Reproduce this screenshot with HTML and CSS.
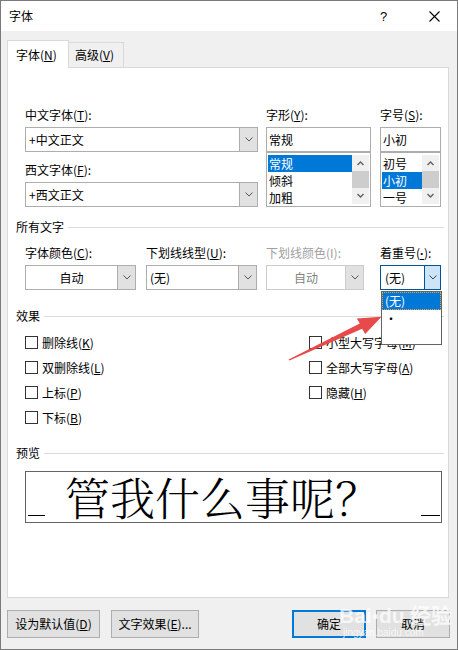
FILE: index.html
```html
<!DOCTYPE html>
<html lang="zh-CN">
<head>
<meta charset="utf-8">
<title>字体</title>
<link rel="stylesheet" href="styles.css">
</head>
<body>
<div class="window">
  <div class="titlebar">
    <span class="title">字体</span>
    <span class="help">?</span>
    <svg class="close" width="11" height="11" viewBox="0 0 11 11"><path d="M0.5 0.5 L10.5 10.5 M10.5 0.5 L0.5 10.5" stroke="#000" stroke-width="1.1" fill="none"/></svg>
  </div>
  <div class="main">
    <div class="tabs">
      <div class="tab active">字体(<u>N</u>)</div>
      <div class="tab">高级(<u>V</u>)</div>
    </div>
    <div class="panel">
      <div class="toprow">
        <div class="col col-font">
          <div class="label">中文字体(<u>T</u>):</div>
          <div class="select"><span class="val">+中文正文</span><span class="arrow"><svg width="8" height="5" viewBox="0 0 8 5"><path d="M0.5 0.5 L4 4 L7.5 0.5" stroke="#555" fill="none"/></svg></span></div>
          <div class="label label2">西文字体(<u>F</u>):</div>
          <div class="select"><span class="val">+西文正文</span><span class="arrow"><svg width="8" height="5" viewBox="0 0 8 5"><path d="M0.5 0.5 L4 4 L7.5 0.5" stroke="#555" fill="none"/></svg></span></div>
        </div>
        <div class="col col-style">
          <div class="label">字形(<u>Y</u>):</div>
          <div class="input">常规</div>
          <div class="list">
            <div class="items">
              <div class="item sel">常规</div>
              <div class="item">倾斜</div>
              <div class="item">加粗</div>
            </div>
            <div class="sbar">
              <div class="sbtn"><svg width="7" height="5" viewBox="0 0 7 5"><path d="M0.5 4 L3.5 1 L6.5 4" stroke="#606060" stroke-width="1.4" fill="none"/></svg></div>
              <div class="thumb"></div>
              <div class="sbtn"><svg width="7" height="5" viewBox="0 0 7 5"><path d="M0.5 1 L3.5 4 L6.5 1" stroke="#606060" stroke-width="1.4" fill="none"/></svg></div>
            </div>
          </div>
        </div>
        <div class="col col-size">
          <div class="label">字号(<u>S</u>):</div>
          <div class="input">小初</div>
          <div class="list">
            <div class="items">
              <div class="item">初号</div>
              <div class="item sel">小初</div>
              <div class="item">一号</div>
            </div>
            <div class="sbar">
              <div class="sbtn"><svg width="7" height="5" viewBox="0 0 7 5"><path d="M0.5 4 L3.5 1 L6.5 4" stroke="#606060" stroke-width="1.4" fill="none"/></svg></div>
              <div class="thumb"></div>
              <div class="sbtn"><svg width="7" height="5" viewBox="0 0 7 5"><path d="M0.5 1 L3.5 4 L6.5 1" stroke="#606060" stroke-width="1.4" fill="none"/></svg></div>
            </div>
          </div>
        </div>
      </div>

      <div class="group group-all"><span>所有文字</span><i></i></div>
      <div class="colorrow">
        <div class="col c1">
          <div class="label">字体颜色(<u>C</u>):</div>
          <div class="select"><span class="val center">自动</span><span class="arrow"><svg width="8" height="5" viewBox="0 0 8 5"><path d="M0.5 0.5 L4 4 L7.5 0.5" stroke="#555" fill="none"/></svg></span></div>
        </div>
        <div class="col c2">
          <div class="label">下划线线型(<u>U</u>):</div>
          <div class="select"><span class="val">(无)</span><span class="arrow"><svg width="8" height="5" viewBox="0 0 8 5"><path d="M0.5 0.5 L4 4 L7.5 0.5" stroke="#555" fill="none"/></svg></span></div>
        </div>
        <div class="col c3">
          <div class="label disabled">下划线颜色(I):</div>
          <div class="select dis"><span class="val center">自动</span><span class="arrow"><svg width="8" height="5" viewBox="0 0 8 5"><path d="M0.5 0.5 L4 4 L7.5 0.5" stroke="#555" fill="none"/></svg></span></div>
        </div>
        <div class="col c4">
          <div class="label">着重号(<u class="dot">·</u>):</div>
          <div class="select focus"><span class="val">(无)</span><span class="arrow"><svg width="8" height="5" viewBox="0 0 8 5"><path d="M0.5 0.5 L4 4 L7.5 0.5" stroke="#444" fill="none"/></svg></span></div>
        </div>
      </div>

      <div class="group group-fx"><span>效果</span><i></i></div>
      <div class="effects">
        <div class="fxcol left">
          <label class="cb"><span class="box"></span>删除线(<u>K</u>)</label>
          <label class="cb"><span class="box"></span>双删除线(<u>L</u>)</label>
          <label class="cb"><span class="box"></span>上标(<u>P</u>)</label>
          <label class="cb"><span class="box"></span>下标(<u>B</u>)</label>
        </div>
        <div class="fxcol right">
          <label class="cb"><span class="box"></span>小型大写字母(<u>M</u>)</label>
          <label class="cb"><span class="box"></span>全部大写字母(<u>A</u>)</label>
          <label class="cb"><span class="box"></span>隐藏(<u>H</u>)</label>
        </div>
      </div>

      <div class="group group-pv"><span>预览</span><i></i></div>
      <div class="preview">
        <span class="us"></span>
        <span class="ptext">管我什么事呢？</span>
        <span class="us us-r"></span>
      </div>
    </div>
  </div>
  <div class="buttons">
    <div class="btn b-def">设为默认值(<u>D</u>)</div>
    <div class="btn b-fx">文字效果(<u>E</u>)...</div>
    <div class="spacer"></div>
    <div class="btn b-ok">确定</div>
    <div class="btn b-cancel">取消</div>
  </div>

  <div class="dropdown">
    <div class="dd-item dd-sel">(无)</div>
    <div class="dd-item">·</div>
  </div>

  <svg class="redarrow" width="458" height="650" viewBox="0 0 458 650">
    <polygon points="288.6,359.4 359.8,323.6 356.8,318.4 381.5,316.8 365.2,334 362.2,328.8 289.4,360.6" fill="#e8494a"/>
  </svg>

  <div class="watermark">
    <div class="wm1">Bai<span class="paw">●</span>du 经验</div>
    <div class="wm2">jingyan.baidu.com</div>
  </div>
</div>
</body>
</html>
```

FILE: styles.css
```css
* { box-sizing: border-box; }
html, body { margin: 0; padding: 0; background: #fff; }
body {
  font-family: "Noto Sans CJK SC", "Microsoft YaHei", sans-serif;
  font-size: 12px;
  color: #000;
}
u { text-decoration: underline; text-underline-offset: 1px; }
u.dot { font-family: "Liberation Sans", sans-serif; font-weight: bold; }

.window {
  position: relative;
  width: 458px;
  height: 650px;
  border: 1px solid #7a7a7a;
  background: #f0f0f0;
  overflow: hidden;
}

.titlebar {
  height: 30px;
  background: #fff;
  display: flex;
  align-items: center;
  padding-left: 8px;
}
.title { font-size: 12px; line-height: 16px; flex: 1; }
.help { font-family: "Liberation Sans", sans-serif; font-size: 13px; width: 10px; margin-right: 39px; }
.close { margin-right: 17px; }

.main { padding: 9px 8px 0 6px; }

.tabs { display: flex; align-items: flex-end; height: 27px; }
.tab {
  height: 25px;
  border: 1px solid #d9d9d9;
  border-bottom: none;
  background: #f0f0f0;
  line-height: 24px;
  padding-left: 6px;
  width: 56px;
  margin-left: -1px;
}
.tab.active {
  position: relative;
  z-index: 2;
  height: 28px;
  margin-bottom: -1px;
  background: #fff;
  width: 62px;
  margin-left: 0;
  padding-left: 8px;
  line-height: 28px;
}

.panel {
  position: relative;
  height: 531px;
  border: 1px solid #d9d9d9;
  background: #fff;
  padding: 39px 6px 0 17px;
}

.label { height: 16px; line-height: 16px; white-space: nowrap; }
.label.disabled { color: #a0a0a0; }
.label2 { margin-top: 10px; }

.select {
  margin-top: 4px;
  height: 25px;
  border: 1px solid #adadad;
  display: flex;
  background: #fff;
}
.select .val { flex: 1; line-height: 23px; padding-left: 3px; white-space: nowrap; }
.select .val.center { text-align: center; padding-left: 0; }
.select .arrow {
  width: 18px;
  background: #e1e1e1;
  border-left: 1px solid #adadad;
  display: flex;
  align-items: center;
  justify-content: center;
}
.select.dis { border-color: #cccccc; background: #fff; }
.select.dis .val { color: #838383; }
.select.dis .arrow { border-left-color: #cccccc; background: #e1e1e1; }
.select.focus { border-color: #005499; }
.select.focus .val { padding-left: 4px; }
.select.focus .arrow { background: #cce4f7; border-left-color: #005499; width: 16px; }

.toprow { display: flex; }
.col-font { width: 233px; }
.col-style { width: 105px; margin-left: 8px; }
.col-size { width: 61px; margin-left: 9px; }

.input {
  margin-top: 4px;
  height: 25px;
  border: 1px solid #adadad;
  line-height: 23px;
  padding-left: 2px;
}
.list {
  height: 55px;
  border: 1px solid #adadad;
  display: flex;
  padding: 2px 1px 2px 1px;
}
.items { flex: 1; }
.item { height: 17px; line-height: 17px; padding-left: 1px; }
.item.sel { background: #0078d7; color: #fff; }
.sbar { width: 17px; display: flex; flex-direction: column; background: #f0f0f0; }
.sbtn { height: 17px; display: flex; align-items: center; justify-content: center; }
.thumb { height: 17px; background: #cdcdcd; }

.group {
  display: flex;
  align-items: center;
  height: 16px;
  margin-left: -9px;
  margin-right: -2px;
}
.group span { line-height: 16px; margin-right: 4px; }
.group i { flex: 1; height: 1px; background: #dcdcdc; }
.group-all { margin-top: 12px; }
.group-fx { margin-top: 18px; }
.group-pv { margin-top: 15px; }

.colorrow { display: flex; margin-top: 10px; }
.c1 { width: 111px; }
.c2 { width: 111px; margin-left: 10px; }
.c3 { width: 98px; margin-left: 9px; }
.c4 { width: 61px; margin-left: 16px; }

.effects { display: flex; margin-top: 6px; }
.fxcol.left { width: 284px; }
.cb { display: flex; align-items: center; height: 25px; white-space: nowrap; }
.cb .box {
  width: 13px;
  height: 13px;
  border: 1px solid #333;
  background: #fff;
  margin-right: 4px;
}

.preview {
  margin-top: 10px;
  height: 52px;
  border: 1px solid #646464;
  display: flex;
  align-items: center;
  padding-left: 2px;
  position: relative;
}
.us { width: 17px; height: 1px; background: #000; align-self: flex-end; margin-bottom: 6px; }
.us-r { margin-left: auto; margin-right: 1px; width: 19px; }
.ptext {
  font-family: "Noto Serif CJK SC", "AR PL UMing CN", "Noto Sans CJK SC", serif;
  font-size: 45px;
  line-height: 50px;
  font-weight: 300;
  margin-left: 20px;
  white-space: nowrap;
}

.buttons {
  display: flex;
  padding: 12px 7px 0 6px;
}
.btn {
  height: 28px;
  background: #e1e1e1;
  border: 1px solid #adadad;
  line-height: 26px;
  text-align: center;
  white-space: nowrap;
}
.b-def { width: 93px; }
.b-fx { width: 88px; margin-left: 11px; }
.spacer { flex: 1; }
.b-ok { width: 74px; border: 2px solid #0078d7; line-height: 24px; }
.b-cancel { width: 74px; margin-left: 10px; }

.dropdown {
  position: absolute;
  left: 380px;
  top: 290px;
  width: 61px;
  height: 54px;
  border: 1px solid #646464;
  background: #fff;
  z-index: 5;
}
.dd-item { height: 18px; line-height: 17px; padding-left: 3px; }
.dd-sel {
  background: #0078d7;
  color: #fff;
  outline: 1px dotted #e8a23a;
  outline-offset: -1px;
}

.redarrow { position: absolute; left: -1px; top: -1px; z-index: 6; pointer-events: none; }

.watermark {
  position: absolute;
  left: 338px;
  top: 604px;
  z-index: 7;
  color: rgba(255,255,255,0.75);
  font-family: "Liberation Sans", sans-serif;
  pointer-events: none;
}
.wm1 { font-size: 21px; font-weight: bold; line-height: 22px; letter-spacing: 0; }
.wm1 .paw { font-size: 12px; vertical-align: top; }
.wm2 { font-size: 10px; line-height: 12px; margin-left: 4px; }
```
